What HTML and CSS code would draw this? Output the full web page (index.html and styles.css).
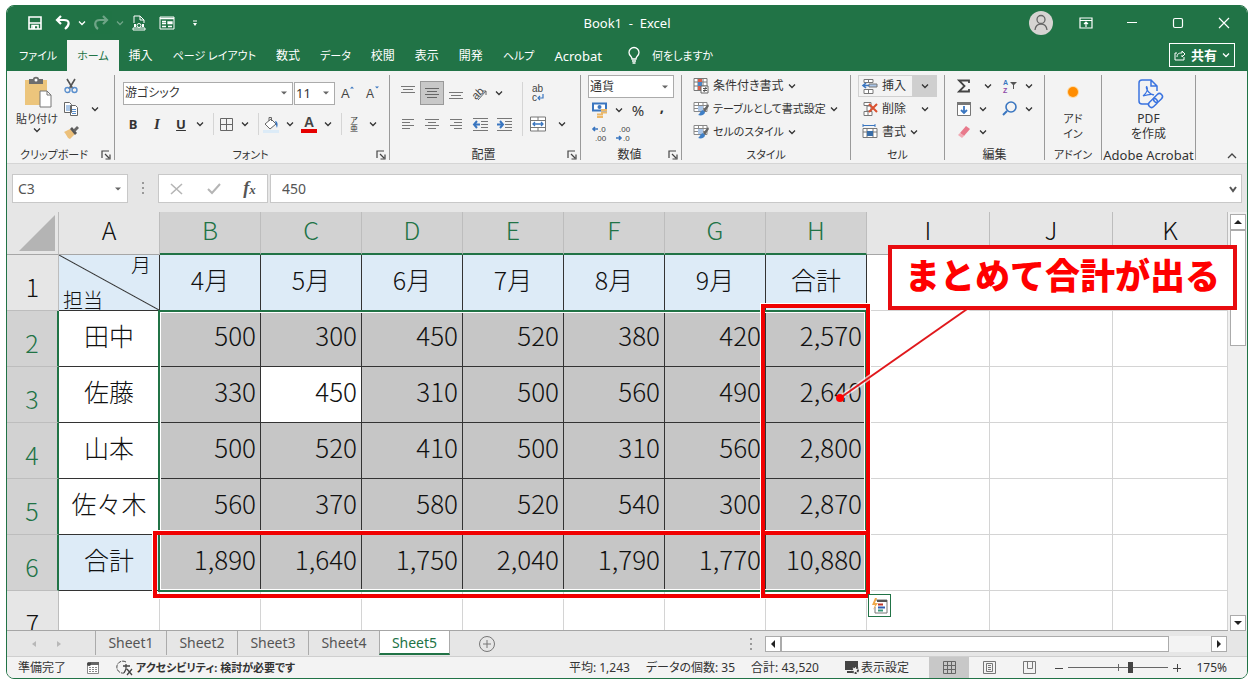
FILE: index.html
```html
<!DOCTYPE html>
<html lang="ja">

<head>
    <meta charset="UTF-8">
    <meta name="viewport" content="width=device-width, initial-scale=1.0">
    <title>Book1 - Excel</title>
    <link rel="stylesheet" href="styles.css">
</head>

<body>
    <!-- 共通アイコン -->
    <svg class="sprite" aria-hidden="true">
        <symbol id="chev" viewBox="0 0 8 8"><path d="M1 2.500l3 3 3-3" fill="none" stroke="currentColor" stroke-width="1.300"/></symbol>
        <symbol id="tri" viewBox="0 0 8 8"><path d="M1 2.500h6L4 5.500z" fill="#666"/></symbol>
        <symbol id="launch" viewBox="0 0 10 10"><path d="M1 8V1h7M4 4l4 4M9 4.500V9H4.500" fill="none" stroke="#444" stroke-width="1.200"/></symbol>
        <symbol id="brushgrid" viewBox="0 0 16 16"><path d="M1 1.500h13v9H1zM1 4.500h13M1 7.500h13M5.500 1.500v9M10 1.500v9" fill="#fff" stroke="#888"/><path d="M5 5h5v5H5z" fill="#a9c4e6"/><path d="M15 3l-5 6 2 2 4-6z" fill="#666"/><path d="M10 9l2 2c0 3-4 4-7 3 2-1 2-4 5-5z" fill="#3f7fc6"/></symbol>
    </svg>

    <div class="window">
        <!-- タイトルバー -->
        <header class="titlebar">
            <div class="quick">
                <button class="q-btn" aria-label="上書き保存"><svg width="14" height="14" viewBox="0 0 14 14"><path d="M1 1h12v12H1z" fill="none" stroke="#fff" stroke-width="1.600"/><path d="M1 7h12M4 13V9.500h6V13" fill="none" stroke="#fff" stroke-width="1.600"/><path d="M5 10h2v3H5z" fill="#fff"/></svg></button>
                <button class="q-btn" aria-label="元に戻す"><svg width="16" height="14" viewBox="0 0 16 14"><path d="M6 0L2 4l4 4M2 4h7c6 0 6 5 1 9" fill="none" stroke="#fff" stroke-width="2.200"/></svg></button>
                <button class="drop" aria-label="元に戻す一覧"><svg width="8" height="8"><use href="#chev"/></svg></button>
                <button class="q-btn faded" aria-label="やり直し"><svg width="16" height="14" viewBox="0 0 16 14"><path d="M10 0l4 4-4 4M14 4H7C1 4 1 10 5 13" fill="none" stroke="#fff" stroke-width="2.200"/></svg></button>
                <button class="drop faded" aria-label="やり直し一覧"><svg width="8" height="8"><use href="#chev"/></svg></button>
                <button class="q-btn" aria-label="印刷プレビュー"><svg width="14" height="16" viewBox="0 0 14 16"><path d="M2 8V1h6l4 4v3M8 1v4h4M1 15h12v-2H1z" fill="none" stroke="#fff"/><path d="M2 9h2v3H2zM10 9h2v3h-2z" fill="#fff"/><circle cx="7" cy="10.500" r="2" fill="none" stroke="#fff"/></svg></button>
                <button class="q-btn" aria-label="フォーム"><svg width="16" height="14" viewBox="0 0 16 14"><path d="M1 1h14v12H1z" fill="none" stroke="#fff"/><path d="M1 2.500h14M3 5.500h4M3 7.500h4M3 10.500h4M9 6h4v1.500H9zM9 10.500h4" fill="none" stroke="#fff" stroke-width="1.300"/></svg></button>
                <button class="q-btn" aria-label="カスタマイズ"><svg width="6" height="8" viewBox="0 0 6 8"><path d="M1 2h4" stroke="#fff"/><path d="M1 4h4L3 7z" fill="#fff"/></svg></button>
            </div>
            <h1 class="title">Book1 &nbsp;- &nbsp;Excel</h1>
            <div class="win-buttons">
                <button class="avatar" aria-label="アカウント"><svg width="24" height="24" viewBox="0 0 24 24"><circle cx="12" cy="12" r="12" fill="#d6d4d2"/><circle cx="12" cy="8.500" r="4" fill="none" stroke="#666" stroke-width="1.300"/><path d="M6 19c1-8 11-8 12 0" fill="none" stroke="#666" stroke-width="1.300"/></svg></button>
                <button class="win-btn" aria-label="リボンの表示オプション"><svg width="14" height="12" viewBox="0 0 14 12"><path d="M1 1h12v10H1zM1 3.500h12M7 10V5.500M5 7l2-2 2 2" fill="none" stroke="#fff" stroke-width="1.200"/></svg></button>
                <button class="win-btn" aria-label="最小化"><svg width="12" height="12"><path d="M1 5.500h10" stroke="#fff"/></svg></button>
                <button class="win-btn" aria-label="最大化"><svg width="12" height="12"><rect x="1.500" y="1.500" width="9" height="9" rx="1.500" fill="none" stroke="#fff" stroke-width="1.200"/></svg></button>
                <button class="win-btn" aria-label="閉じる"><svg width="12" height="12"><path d="M1 1l10 10M11 1L1 11" stroke="#fff" stroke-width="1.200"/></svg></button>
            </div>
        </header>

        <!-- リボンのタブ -->
        <nav class="tabs">
            <a href="#" class="tab kana">ファイル</a>
            <a href="#" class="tab kana active">ホーム</a>
            <a href="#" class="tab">挿入</a>
            <a href="#" class="tab kana">ページ レイアウト</a>
            <a href="#" class="tab">数式</a>
            <a href="#" class="tab kana">データ</a>
            <a href="#" class="tab">校閲</a>
            <a href="#" class="tab">表示</a>
            <a href="#" class="tab">開発</a>
            <a href="#" class="tab kana">ヘルプ</a>
            <a href="#" class="tab latin">Acrobat</a>
            <a href="#" class="tab kana tell"><svg width="12" height="17" viewBox="0 0 12 17"><path d="M4 12c0-3-3-3-3-6.500a5 5 0 0 1 10 0C11 9 8 9 8 12zM4 14h4M4.500 16h3" fill="none" stroke="#fff" stroke-width="1.300"/></svg>何をしますか</a>
            <button class="share"><svg width="12" height="12" viewBox="0 0 12 12"><path d="M3 4H1v7h9V8M3 8c0-4 3-4 5-4V2l3 3-3 3V6" fill="none" stroke="#fff"/></svg>共有<svg width="8" height="8"><use href="#chev"/></svg></button>
        </nav>

        <!-- リボン -->
        <div class="ribbon">
            <section class="group g-clip">
                <div class="body">
                    <button class="big kana">
                        <svg width="30" height="32" viewBox="0 0 30 32"><path d="M3 3h22v25H3z" fill="#ecc57c"/><path d="M7 2h4c0-3 6-3 6 0h4v5H7z" fill="#6d6d6d"/><circle cx="14" cy="3" r="1.500" fill="#fff"/><path d="M18 14h7l4 4v12H18z" fill="#fff" stroke="#777"/><path d="M25 14v4h4" fill="none" stroke="#777"/></svg>
                        <span>貼り付け</span>
                        <svg width="8" height="8"><use href="#chev"/></svg>
                    </button>
                    <div class="stack">
                        <button class="tool" aria-label="切り取り"><svg width="14" height="16" viewBox="0 0 14 16"><path d="M3 1l6 10M11 1L5 11" stroke="#555" stroke-width="1.600"/><circle cx="3.500" cy="12" r="2.500" fill="none" stroke="#5a8fcd" stroke-width="1.400"/><circle cx="10.500" cy="12" r="2.500" fill="none" stroke="#5a8fcd" stroke-width="1.400"/></svg></button>
                        <button class="tool" aria-label="コピー"><svg width="16" height="16" viewBox="0 0 16 16"><path d="M1.500 1.500h5l2 2v8h-7zM7.500 4.500h5l2 2v8h-7z" fill="#fff" stroke="#666"/><path d="M3 5h4M3 7h4M3 9h4M9 8.500h4M9 10.500h4M9 12.500h4" stroke="#5a8fcd"/></svg></button>
                        <button class="tool" aria-label="書式のコピー"><svg width="16" height="16" viewBox="0 0 16 16"><path d="M1 8l6-3 5 5-5 5C4 14 4 11 1 8z" fill="#ecc07a"/><path d="M7 5l2-2 5 6-2 2z" fill="#555"/><path d="M10 6l4-4 2 2-4 4z" fill="#666"/></svg></button>
                    </div>
                    <button class="drop mid" aria-label="コピー一覧"><svg width="8" height="8"><use href="#chev"/></svg></button>
                </div>
                <footer class="cap kana"><span>クリップボード</span><svg width="10" height="10"><use href="#launch"/></svg></footer>
            </section>

            <section class="group g-font">
                <div class="body rows">
                    <div class="row combos">
                        <label class="combo wide"><select aria-label="フォント"><option>游ゴシック</option></select><svg width="8" height="8"><use href="#tri"/></svg></label>
                        <label class="combo narrow"><select aria-label="フォント サイズ"><option>11</option></select><svg width="8" height="8"><use href="#tri"/></svg></label>
                        <button class="tool" aria-label="拡大"><svg width="14" height="16" viewBox="0 0 14 16"><text x="0" y="13" class="glyph" font-size="13">A</text><path d="M9 3.500l2-2 2 2z" fill="#3a76c0"/></svg></button>
                        <button class="tool" aria-label="縮小"><svg width="14" height="16" viewBox="0 0 14 16"><text x="0" y="13" class="glyph" font-size="12">A</text><path d="M9 1.500l2 2 2-2z" fill="#3a76c0"/></svg></button>
                    </div>
                    <div class="row">
                        <button class="tool bold">B</button>
                        <button class="tool ital">I</button>
                        <button class="tool under">U</button>
                        <button class="drop" aria-label="下線"><svg width="8" height="8"><use href="#chev"/></svg></button>
                        <i class="sep"></i>
                        <button class="tool" aria-label="罫線"><svg width="15" height="15" viewBox="0 0 15 15"><path d="M1.500 1.500h12v12h-12zM7.500 1.500v12M1.500 7.500h12" fill="none" stroke="#666"/></svg></button>
                        <button class="drop" aria-label="罫線一覧"><svg width="8" height="8"><use href="#chev"/></svg></button>
                        <i class="sep"></i>
                        <button class="tool" aria-label="塗りつぶし"><svg width="16" height="17" viewBox="0 0 16 17"><path d="M2 8l6-5 5 5-6 5z" fill="#fff" stroke="#666"/><path d="M6 5V1.500h2.500V5" fill="none" stroke="#666"/><path d="M12 5c3 0 3 4 2 7-1-2-1-4-2-7z" fill="#3a76c0"/><path d="M0 14h16v3H0z" fill="#dcebf7"/></svg></button>
                        <button class="drop" aria-label="塗りつぶし一覧"><svg width="8" height="8"><use href="#chev"/></svg></button>
                        <button class="tool" aria-label="フォントの色"><svg width="16" height="17" viewBox="0 0 16 17"><text x="3" y="11" class="glyph" font-size="14" font-weight="700">A</text><path d="M0 13h16v4H0z" fill="#e60000"/></svg></button>
                        <button class="drop" aria-label="フォントの色一覧"><svg width="8" height="8"><use href="#chev"/></svg></button>
                        <i class="sep"></i>
                        <button class="tool ruby" aria-label="ふりがな"><small>ア</small><small>亜</small></button>
                        <button class="drop" aria-label="ふりがな一覧"><svg width="8" height="8"><use href="#chev"/></svg></button>
                    </div>
                </div>
                <footer class="cap kana"><span>フォント</span><svg width="10" height="10"><use href="#launch"/></svg></footer>
            </section>

            <section class="group g-align">
                <div class="body rows side">
                    <div class="lines">
                        <div class="row">
                            <button class="tool" aria-label="上揃え"><svg width="14" height="16"><path d="M0 1.500h14M2 4.500h10M0 7.500h14" stroke="#777"/></svg></button>
                            <button class="tool on" aria-label="上下中央揃え"><svg width="14" height="16"><path d="M0 3.500h14M2 6.500h10M0 9.500h14M2 12.500h10" stroke="#666"/></svg></button>
                            <button class="tool" aria-label="下揃え"><svg width="14" height="16"><path d="M0 7.500h14M2 10.500h10M0 13.500h14" stroke="#777"/></svg></button>
                            <button class="tool" aria-label="方向"><svg width="16" height="16" viewBox="0 0 16 16"><text x="0" y="12" class="glyph" font-size="11" transform="rotate(-45 6 9)">ab</text><path d="M6 15l8-9M10 6h4v4" fill="none" stroke="#666"/></svg></button>
                            <button class="drop" aria-label="方向一覧"><svg width="8" height="8"><use href="#chev"/></svg></button>
                        </div>
                        <div class="row">
                            <button class="tool" aria-label="左揃え"><svg width="12" height="12"><path d="M0 1.500h12M0 4.500h8M0 7.500h12M0 10.500h8" stroke="#777"/></svg></button>
                            <button class="tool" aria-label="中央揃え"><svg width="14" height="12"><path d="M0 1.500h14M3 4.500h8M0 7.500h14M3 10.500h8" stroke="#777"/></svg></button>
                            <button class="tool" aria-label="右揃え"><svg width="12" height="12"><path d="M0 1.500h12M4 4.500h8M0 7.500h12M4 10.500h8" stroke="#777"/></svg></button>
                            <button class="tool" aria-label="インデントを減らす"><svg width="15" height="13"><path d="M0 .5h15M8 3.500h7M8 6.500h7M8 9.500h7M0 12.500h15" stroke="#777"/><path d="M7 6.500H1M4 3L1 6.500 4 10" fill="none" stroke="#3a76c0" stroke-width="2"/></svg></button>
                            <button class="tool" aria-label="インデントを増やす"><svg width="15" height="13"><path d="M0 .5h15M8 3.500h7M8 6.500h7M8 9.500h7M0 12.500h15" stroke="#777"/><path d="M0 6.500h6M3 3l3 3.500L3 10" fill="none" stroke="#3a76c0" stroke-width="2"/></svg></button>
                        </div>
                    </div>
                    <i class="sep tall"></i>
                    <div class="lines">
                        <div class="row">
                            <button class="tool" aria-label="折り返して全体を表示"><svg width="14" height="18" viewBox="0 0 14 18"><text x="1" y="8" class="glyph" font-size="10">ab</text><text x="1" y="17" class="glyph" font-size="10">c</text><path d="M12 10v4H7M9 12l-2 2 2 2" fill="none" stroke="#3a76c0" stroke-width="1.200"/></svg></button>
                        </div>
                        <div class="row">
                            <button class="tool" aria-label="セルを結合"><svg width="16" height="16" viewBox="0 0 16 16"><path d="M.5 1v14h15V1zM.5 4.500h15M.5 11.500h15M8 1v3.500M8 11.500V15" fill="#fff" stroke="#777"/><path d="M3 8h10M5 6L3 8l2 2M11 6l2 2-2 2" fill="none" stroke="#3a76c0" stroke-width="1.300"/></svg></button>
                            <button class="drop far" aria-label="結合一覧"><svg width="8" height="8"><use href="#chev"/></svg></button>
                        </div>
                    </div>
                </div>
                <footer class="cap"><span>配置</span><svg width="10" height="10"><use href="#launch"/></svg></footer>
            </section>

            <section class="group g-num">
                <div class="body triple">
                    <label class="combo"><select aria-label="表示形式"><option>通貨</option></select><svg width="8" height="8"><use href="#tri"/></svg></label>
                    <div class="row">
                        <button class="tool" aria-label="通貨表示形式"><svg width="16" height="16" viewBox="0 0 16 16"><path d="M1 1.500h13v7H1z" fill="#fff" stroke="#3a76c0" stroke-width="2"/><circle cx="7.500" cy="5" r="2" fill="#3a76c0"/><path d="M9 8h6M9 10.500h6M5 12.500h6M5 15h6" stroke="#ecb868" stroke-width="2"/></svg></button>
                        <button class="drop" aria-label="通貨一覧"><svg width="8" height="8"><use href="#chev"/></svg></button>
                        <button class="tool sign">%</button>
                        <button class="tool sign comma">,</button>
                    </div>
                    <div class="row">
                        <button class="tool" aria-label="小数点以下の桁数を増やす"><svg width="16" height="18" viewBox="0 0 16 18"><text x="7" y="8" class="glyph" font-size="8">.0</text><text x="3" y="17" class="glyph" font-size="8">.00</text><path d="M6 5H1M3 3L1 5l2 2" fill="none" stroke="#3a76c0" stroke-width="1.600"/></svg></button>
                        <button class="tool" aria-label="小数点以下の桁数を減らす"><svg width="16" height="18" viewBox="0 0 16 18"><text x="3" y="8" class="glyph" font-size="8">.00</text><text x="7" y="17" class="glyph" font-size="8">.0</text><path d="M0 14h5M3 12l2 2-2 2" fill="none" stroke="#3a76c0" stroke-width="1.600"/></svg></button>
                    </div>
                </div>
                <footer class="cap"><span>数値</span><svg width="10" height="10"><use href="#launch"/></svg></footer>
            </section>

            <section class="group g-style">
                <div class="body triple">
                    <button class="line"><svg width="16" height="16" viewBox="0 0 16 16"><path d="M1 .5h13v12H1zM1 4h13M1 8h13M5 .5v12M10 .5v12" fill="#fff" stroke="#777"/><path d="M5 1h4v3H5zM5 8h4v4H5z" fill="#d8604c"/><path d="M5 4h4v4H5z" fill="#4a83c6"/><path d="M8 8h7v7H8z" fill="#fff" stroke="#666"/><path d="M10 10.500h4M10 12.500h4M13 9l-2 5" stroke="#555"/></svg>条件付き書式<svg width="8" height="8"><use href="#chev"/></svg></button>
                    <button class="line kana"><svg width="16" height="16"><use href="#brushgrid"/></svg>テーブルとして書式設定<svg width="8" height="8"><use href="#chev"/></svg></button>
                    <button class="line kana"><svg width="16" height="16"><use href="#brushgrid"/></svg>セルのスタイル<svg width="8" height="8"><use href="#chev"/></svg></button>
                </div>
                <footer class="cap kana solo"><span>スタイル</span></footer>
            </section>

            <section class="group g-cell">
                <div class="body triple">
                    <div class="row split hot">
                        <button class="line"><svg width="16" height="16" viewBox="0 0 16 16"><path d="M2 1.500h9v3H2zM6.500 1.500v3M2 11.500h9v4H2zM6.500 11.500v4" fill="#fff" stroke="#777"/><path d="M7 6h8v3H7z" fill="#a9c4e6" stroke="#777"/><path d="M7 7.500H1M4 5L1 7.500 4 10" fill="none" stroke="#3a76c0" stroke-width="1.600"/></svg>挿入</button>
                        <button class="arrow" aria-label="挿入一覧"><svg width="8" height="8"><use href="#chev"/></svg></button>
                    </div>
                    <div class="row split">
                        <button class="line"><svg width="16" height="16" viewBox="0 0 16 16"><path d="M2 1.500h7v3H2zM5 5v5h4V5zM2 10.500h8v4H2zM6 10.500v4" fill="#fff" stroke="#777"/><path d="M7 3l8 8M15 3l-8 8" stroke="#d9502e" stroke-width="2"/></svg>削除</button>
                        <button class="arrow" aria-label="削除一覧"><svg width="8" height="8"><use href="#chev"/></svg></button>
                    </div>
                    <div class="row split">
                        <button class="line"><svg width="16" height="16" viewBox="0 0 16 16"><path d="M1 1.500h12M1 0v3M13 0v3" stroke="#3a76c0"/><path d="M1 4.500h14v9H1zM5 4.500v9M11 4.500v9M1 8h14" fill="#fff" stroke="#777"/><path d="M5 7h6v5H5z" fill="#3a6ea8"/></svg>書式<svg width="8" height="8"><use href="#chev"/></svg></button>
                    </div>
                </div>
                <footer class="cap kana solo"><span>セル</span></footer>
            </section>

            <section class="group g-edit">
                <div class="body duo">
                    <div class="triple">
                        <div class="row"><button class="tool" aria-label="合計"><svg width="14" height="14" viewBox="0 0 14 14"><path d="M12 4V1.500H2L7.500 7 2 12.500h10V10" fill="none" stroke="#444" stroke-width="1.800"/></svg></button><button class="drop far" aria-label="合計一覧"><svg width="8" height="8"><use href="#chev"/></svg></button></div>
                        <div class="row"><button class="tool" aria-label="フィル"><svg width="14" height="14" viewBox="0 0 14 14"><path d="M.5.5h13v13H.5z" fill="#fff" stroke="#777"/><path d="M0 0h14v3H0z" fill="#777"/><path d="M7 4v7M4 8l3 3 3-3" fill="none" stroke="#3a76c0" stroke-width="1.800"/></svg></button><button class="drop" aria-label="フィル一覧"><svg width="8" height="8"><use href="#chev"/></svg></button></div>
                        <div class="row"><button class="tool" aria-label="クリア"><svg width="14" height="14" viewBox="0 0 14 14"><path d="M9 1l4 3-6 7-4-3z" fill="#e8798b"/><path d="M3 8l4 3-2 2-4-3z" fill="#f2a9b4"/></svg></button><button class="drop" aria-label="クリア一覧"><svg width="8" height="8"><use href="#chev"/></svg></button></div>
                    </div>
                    <div class="triple">
                        <div class="row"><button class="tool" aria-label="並べ替えとフィルター"><svg width="14" height="16" viewBox="0 0 14 16"><text x="0" y="7" class="sort-a" font-size="7">A</text><text x="0" y="15" class="sort-z" font-size="7">Z</text><path d="M7 4h7l-3 3v4h-1V7z" fill="#555"/></svg></button><button class="drop" aria-label="並べ替え一覧"><svg width="8" height="8"><use href="#chev"/></svg></button></div>
                        <div class="row"><button class="tool" aria-label="検索と選択"><svg width="16" height="16" viewBox="0 0 16 16"><circle cx="9" cy="6" r="5" fill="none" stroke="#3a76c0" stroke-width="1.600"/><path d="M5 10l-4 4" stroke="#3a76c0" stroke-width="2"/></svg></button><button class="drop" aria-label="検索一覧"><svg width="8" height="8"><use href="#chev"/></svg></button></div>
                    </div>
                </div>
                <footer class="cap solo"><span>編集</span></footer>
            </section>

            <section class="group g-addin">
                <div class="body">
                    <button class="big kana"><svg width="30" height="32" viewBox="0 0 30 32"><circle cx="15" cy="15" r="6" fill="#ffd9a0"/><circle cx="15" cy="15" r="5" fill="#ff8c00"/></svg><span>アド<br>イン</span></button>
                </div>
                <footer class="cap kana solo"><span>アドイン</span></footer>
            </section>

            <section class="group g-adobe">
                <div class="body">
                    <button class="big"><svg width="30" height="32" viewBox="0 0 30 32"><path d="M14 27H8a3 3 0 0 1-3-3V6a3 3 0 0 1 3-3h9l6 6v5M17 3v6h6" fill="none" stroke="#3b74e0" stroke-width="1.500"/><path d="M9 19c4-3 5-7 4-9s-2 4 6 8c2 0-1-2-10 1z" fill="none" stroke="#3b74e0" stroke-width="1.200"/><g fill="none" stroke="#3b74e0" stroke-width="1.500"><rect x="19" y="18" width="10" height="6" rx="3" transform="rotate(-45 24 21)"/><rect x="14" y="23" width="10" height="6" rx="3" transform="rotate(-45 19 26)"/></g></svg><span>PDF<br>を作成</span></button>
                </div>
                <footer class="cap solo latin"><span>Adobe Acrobat</span></footer>
            </section>

            <button class="collapse" aria-label="リボンを折りたたむ"><svg width="10" height="8"><path d="M1 6l4-4 4 4" fill="none" stroke="#444" stroke-width="1.300"/></svg></button>
        </div>

        <!-- 数式バー -->
        <div class="formula">
            <label class="box name"><input type="text" value="C3" aria-label="名前ボックス"><svg width="8" height="8"><use href="#tri"/></svg></label>
            <span class="grip"></span>
            <div class="box fx">
                <button aria-label="キャンセル"><svg width="14" height="12"><path d="M1 1l11 10M12 1L1 11" stroke="#b5b5b5" stroke-width="1.600"/></svg></button>
                <button aria-label="入力"><svg width="14" height="12"><path d="M1 6l4 4 8-9" fill="none" stroke="#b5b5b5" stroke-width="2"/></svg></button>
                <button class="fx-mark">f<small>x</small></button>
            </div>
            <label class="box value"><input type="text" value="450" aria-label="数式"><svg width="10" height="10"><path d="M2 3l3 4 3-4" fill="none" stroke="#555" stroke-width="2"/></svg></label>
        </div>

        <!-- シート -->
        <main class="book">
            <div class="grid">
                <table class="sheet">
                    <colgroup>
                        <col class="c-num">
                        <col class="c-cell" span="8">
                        <col class="c-wide" span="2">
                        <col>
                    </colgroup>
                    <thead>
                        <tr>
                            <th class="corner"><svg width="36" height="36"><path d="M36 0v36H0z" fill="#b4b4b4"/></svg></th>
                            <th>A</th>
                            <th class="sel">B</th>
                            <th class="sel">C</th>
                            <th class="sel">D</th>
                            <th class="sel">E</th>
                            <th class="sel">F</th>
                            <th class="sel">G</th>
                            <th class="sel">H</th>
                            <th>I</th>
                            <th>J</th>
                            <th>K</th>
                        </tr>
                    </thead>
                    <tbody>
                        <tr>
                            <th>1</th>
                            <td class="diag"><div><span>月</span><span>担当</span></div></td>
                            <td class="head">4月</td>
                            <td class="head">5月</td>
                            <td class="head">6月</td>
                            <td class="head">7月</td>
                            <td class="head">8月</td>
                            <td class="head">9月</td>
                            <td class="head">合計</td>
                            <td></td><td></td><td></td>
                        </tr>
                        <tr>
                            <th class="sel">2</th>
                            <td class="person">田中</td>
                            <td class="num">500</td><td class="num">300</td><td class="num">450</td><td class="num">520</td><td class="num">380</td><td class="num">420</td><td class="num">2,570</td>
                            <td></td><td></td><td></td>
                        </tr>
                        <tr>
                            <th class="sel">3</th>
                            <td class="person">佐藤</td>
                            <td class="num">330</td><td class="num current">450</td><td class="num">310</td><td class="num">500</td><td class="num">560</td><td class="num">490</td><td class="num">2,640</td>
                            <td></td><td></td><td></td>
                        </tr>
                        <tr>
                            <th class="sel">4</th>
                            <td class="person">山本</td>
                            <td class="num">500</td><td class="num">520</td><td class="num">410</td><td class="num">500</td><td class="num">310</td><td class="num">560</td><td class="num">2,800</td>
                            <td></td><td></td><td></td>
                        </tr>
                        <tr>
                            <th class="sel">5</th>
                            <td class="person">佐々木</td>
                            <td class="num">560</td><td class="num">370</td><td class="num">580</td><td class="num">520</td><td class="num">540</td><td class="num">300</td><td class="num">2,870</td>
                            <td></td><td></td><td></td>
                        </tr>
                        <tr>
                            <th class="sel">6</th>
                            <td class="head">合計</td>
                            <td class="num">1,890</td><td class="num">1,640</td><td class="num">1,750</td><td class="num">2,040</td><td class="num">1,790</td><td class="num">1,770</td><td class="num">10,880</td>
                            <td></td><td></td><td></td>
                        </tr>
                        <tr>
                            <th>7</th>
                            <td></td><td></td><td></td><td></td><td></td><td></td><td></td><td></td><td></td><td></td><td></td>
                        </tr>
                    </tbody>
                </table>
            </div>
            <div class="vscroll">
                <button aria-label="上へ"><svg width="8" height="8"><path d="M0 6h8L4 2z" fill="#222"/></svg></button>
                <span class="thumb"></span>
                <button class="end" aria-label="下へ"><svg width="8" height="8"><path d="M0 2h8L4 6z" fill="#222"/></svg></button>
            </div>

            <div class="selection"></div>
            <div class="frame frame-row"></div>
            <div class="frame frame-col"></div>
            <button class="quick-analysis" aria-label="クイック分析"><svg width="16" height="16" viewBox="0 0 16 16"><path d="M4 2h11v13H3V9" fill="#fff" stroke="#777"/><path d="M5 3h10" stroke="#555" stroke-width="2"/><path d="M6 6.500h5" stroke="#c0392b" stroke-width="2"/><path d="M6 9.500h7" stroke="#2f5fb3" stroke-width="2"/><path d="M6 12.500h5" stroke="#3a9a7a" stroke-width="2"/><path d="M3 0L0 7h3l-2 5 5-7H3l2-5z" fill="#f0a94a"/></svg></button>
            <svg class="pointer" width="140" height="104"><path d="M8 94L138 3" stroke="#fff" stroke-width="5" opacity=".7"/><path d="M8 94L138 3" stroke="#e0181c" stroke-width="2"/><circle cx="8" cy="94" r="4" fill="#f00"/></svg>
            <div class="callout">まとめて合計が出る</div>
        </main>

        <!-- シート見出し -->
        <div class="sheetbar">
            <button class="nav" aria-label="前のシート"><svg width="6" height="8"><path d="M5 1v6L1 4z" fill="#b8b8b8"/></svg></button>
            <button class="nav" aria-label="次のシート"><svg width="6" height="8"><path d="M1 1v6l4-3z" fill="#b8b8b8"/></svg></button>
            <div class="sheets">
                <a href="#">Sheet1</a>
                <a href="#">Sheet2</a>
                <a href="#">Sheet3</a>
                <a href="#">Sheet4</a>
                <a href="#" class="active">Sheet5</a>
            </div>
            <button class="add" aria-label="新しいシート"><svg width="16" height="16" viewBox="0 0 16 16"><circle cx="8" cy="8" r="7.500" fill="none" stroke="#777"/><path d="M8 4v8M4 8h8" stroke="#777"/></svg></button>
            <span class="grip small"></span>
            <div class="hscroll">
                <button aria-label="左へ"><svg width="8" height="8"><path d="M6 0v8L2 4z" fill="#222"/></svg></button>
                <span class="thumb"></span>
                <button class="end" aria-label="右へ"><svg width="8" height="8"><path d="M2 0v8l4-4z" fill="#222"/></svg></button>
            </div>
        </div>

        <!-- ステータスバー -->
        <footer class="status">
            <span>準備完了</span>
            <svg width="14" height="13" viewBox="0 0 14 13"><path d="M1.500 2.500h11v10h-11z" fill="#fff" stroke="#888"/><path d="M4 1h9v3H4z" fill="#666"/><circle cx="3" cy="3" r="2" fill="#444"/><path d="M3 6.500h8M3 8.500h8M3 10.500h8" stroke="#888" stroke-dasharray="2 1"/></svg>
            <button class="access kana"><svg width="16" height="16" viewBox="0 0 16 16"><path d="M8 2a6 6 0 1 0-2 11" fill="none" stroke="#444" stroke-dasharray="4 1"/><path d="M5 6h7M8 4v5l-2 4M9 9l5 6M14 9l-5 6" fill="none" stroke="#444" stroke-width="1.300"/></svg>アクセシビリティ: 検討が必要です</button>
            <div class="totals">
                <span>平均: 1,243</span>
                <span>データの個数: 35</span>
                <span>合計: 43,520</span>
            </div>
            <button class="disp"><svg width="16" height="15" viewBox="0 0 16 15"><path d="M1 1h13v9H1z" fill="#444"/><path d="M3 12h5" stroke="#444" stroke-width="2"/><circle cx="11" cy="10" r="3" fill="#f3f3f3" stroke="#444" stroke-width="2" stroke-dasharray="2 1"/></svg>表示設定</button>
            <button class="view on" aria-label="標準"><svg width="13" height="13"><path d="M.5.500h12v12H.5zM4.500.500v12M8.500.500v12M.5 4.500h12M.5 8.500h12" fill="none" stroke="#666"/></svg></button>
            <button class="view" aria-label="ページ レイアウト"><svg width="13" height="13"><path d="M.5.500h12v12H.5zM3.500 2.500h6v8h-6zM5 4.500h3M5 6.500h3M5 8.500h3" fill="none" stroke="#777"/></svg></button>
            <button class="view" aria-label="改ページ プレビュー"><svg width="13" height="13"><path d="M.5.500h12v12H.5zM4.500.500v7h5M9.500.500v7" fill="none" stroke="#777"/></svg></button>
            <button class="zoom" aria-label="縮小"><svg width="8" height="8"><path d="M0 4.500h8" stroke="#444"/></svg></button>
            <input class="slider" type="range" min="0" max="100" value="63" aria-label="ズーム">
            <button class="zoom" aria-label="拡大"><svg width="8" height="8"><path d="M0 4.500h8M4.500 0v8" stroke="#444"/></svg></button>
            <span class="percent">175%</span>
        </footer>
    </div>
</body>

</html>
```

FILE: styles.css
```css
* {
    box-sizing: border-box;
}

body {
    margin: 0;
    padding: 5px 6px 6px;
    background-color: #fff;
    font-family: "Noto Sans", "Noto Sans CJK JP", sans-serif;
    font-size: 12px;
    line-height: 16px;
    color: #333;
    font-feature-settings: "palt";
}

button,
input,
select {
    margin: 0;
    padding: 0;
    border: none;
    background: none;
    color: inherit;
    font: inherit;
    font-feature-settings: inherit;
}

a {
    color: inherit;
    text-decoration: none;
}

svg {
    display: block;
    flex: none;
    overflow: visible;
}

.sprite {
    width: 0;
    height: 0;
    position: absolute;
}

.glyph {
    fill: #444;
    font-family: "Liberation Sans", sans-serif;
}

.sort-a {
    fill: #3a76c0;
    font-family: "Liberation Sans", sans-serif;
    font-weight: 700;
}

.sort-z {
    fill: #8d4aa8;
    font-family: "Liberation Sans", sans-serif;
    font-weight: 700;
}

.window {
    display: flex;
    flex-direction: column;
    height: calc(100vh - 11px);
    border: 1px solid #217346;
    border-radius: 8px;
    overflow: hidden;
    background-color: #e6e6e6;
}

/* タイトルバー */
.titlebar {
    display: flex;
    align-items: center;
    height: 34px;
    flex: none;
    background-color: #217346;
    color: #fff;
}

.quick,
.win-buttons {
    display: flex;
    align-items: center;
    flex: 1;
}

.q-btn {
    display: flex;
    justify-content: center;
    width: 28px;
}

.q-btn:first-child {
    margin-left: 14px;
}

.drop {
    display: flex;
    align-items: center;
    justify-content: center;
    width: 14px;
    height: 22px;
}

.quick .drop {
    width: 10px;
}

.faded {
    opacity: 0.35;
}

.title {
    margin: 0;
    font-size: 13px;
    font-weight: 400;
}

.win-buttons {
    justify-content: flex-end;
}

.win-btn {
    display: flex;
    justify-content: center;
    width: 46px;
}

.avatar {
    margin-right: 10px;
}

/* タブ */
.tabs {
    display: flex;
    align-items: stretch;
    height: 31px;
    flex: none;
    padding: 0 12px 0 2px;
    background-color: #217346;
    color: #fff;
    white-space: nowrap;
}

.tab {
    display: flex;
    align-items: center;
    padding: 0 10px;
}

.tab.active {
    background-color: #f3f3f3;
    color: #217346;
}

.kana {
    font-size: 11px;
}

.tab.tell {
    gap: 12px;
    padding-left: 16px;
}

.share {
    display: flex;
    align-items: center;
    gap: 5px;
    height: 24px;
    margin: 3px 0 0 auto;
    padding: 0 4px;
    border: 1px solid #fff;
    font-size: 13px;
    font-weight: 700;
}

.latin {
    font-size: 13px;
}

/* リボン */
.ribbon {
    display: flex;
    height: 93px;
    flex: none;
    padding: 4px 0 3px;
    background-color: #f3f3f3;
    border-bottom: 1px solid #d5d5d5;
    white-space: nowrap;
}

.group {
    display: flex;
    flex-direction: column;
    justify-content: space-between;
    flex: none;
    border-right: 1px solid #9a9a9a;
}

.g-clip {
    width: 108px;
}

.g-font {
    width: 275px;
}

.g-align {
    width: 191px;
}

.g-num {
    width: 101px;
}

.g-style {
    width: 169px;
}

.g-cell {
    width: 94px;
}

.g-edit {
    width: 100px;
}

.g-addin {
    width: 57px;
}

.g-adobe {
    width: 94px;
}

.body {
    display: flex;
}

.row {
    display: flex;
    align-items: center;
    height: 22px;
}

.rows {
    flex-direction: column;
    gap: 9px;
    padding: 7px 0 0 6px;
}

.rows.side {
    flex-direction: row;
    gap: 0;
}

.lines {
    display: flex;
    flex-direction: column;
    gap: 9px;
}

.triple {
    display: flex;
    flex-direction: column;
    gap: 1px;
    padding-left: 7px;
}

.duo .triple:last-child {
    padding-left: 3px;
}

.combos {
    gap: 1px;
    padding-left: 2px;
}

.tool {
    display: flex;
    align-items: center;
    justify-content: center;
    width: 24px;
    height: 22px;
}

.tool.on {
    height: 24px;
    border: 1px solid #999;
    background-color: #c8c8c8;
}

.bold {
    font-size: 13px;
    font-weight: 700;
}

.ital {
    font-family: "Liberation Serif", serif;
    font-size: 15px;
    font-style: italic;
    font-weight: 700;
}

.under {
    font-size: 13px;
    font-weight: 700;
    text-decoration: underline;
}

.ruby {
    flex-direction: column;
}

.ruby small {
    font-size: 8px;
    line-height: 8px;
}

.sign {
    font-size: 15px;
}

.comma {
    font-weight: 700;
    padding-bottom: 8px;
}

.far {
    margin-left: 5px;
}

.sep {
    width: 1px;
    height: 22px;
    margin-left: 6px;
    background-color: #d5d5d5;
}

.sep.tall {
    height: 54px;
    margin-right: 3px;
}

.combo {
    display: flex;
    align-items: center;
    width: 86px;
    height: 23px;
    padding: 0 4px 0 1px;
    border: 1px solid #ababab;
    background-color: #fff;
}

.combo select {
    flex: 1;
    min-width: 0;
    appearance: none;
    outline: none;
}

.combo.wide {
    width: 170px;
}

.combo.narrow {
    width: 41px;
    font-size: 13px;
}

.big {
    display: flex;
    flex-direction: column;
    align-items: center;
    flex: 1;
    padding-top: 2px;
    line-height: 15px;
}

.big span {
    padding-top: 2px;
}

.g-clip .body {
    padding-left: 7px;
    gap: 2px;
}

.g-clip .big {
    flex: none;
    width: 46px;
}

.stack {
    display: flex;
    flex-direction: column;
    gap: 1px;
}

.stack .tool {
    width: 18px;
}

.mid {
    align-self: center;
    margin-left: 6px;
}

.line {
    display: flex;
    align-items: center;
    gap: 4px;
    height: 22px;
    padding-left: 4px;
}

.split .line {
    width: 55px;
    flex: none;
}

.arrow {
    display: flex;
    align-items: center;
    justify-content: center;
    width: 24px;
    height: 22px;
}

.hot .line {
    border: 1px solid #d0d0d0;
    padding-left: 3px;
}

.hot .arrow {
    background-color: #cfcfcf;
}

.cap {
    display: flex;
    align-items: center;
    height: 10px;
    padding: 0 3px 0 10px;
    line-height: 10px;
}

.cap span {
    flex: 1;
    text-align: center;
}

.cap.solo {
    padding: 0;
}

.g-clip .cap {
    padding-left: 0;
}

.collapse {
    align-self: flex-end;
    margin: 0 10px 0 auto;
}

/* 数式バー */
.formula {
    display: flex;
    flex: none;
    padding: 10px 5px 9px;
}

.box {
    display: flex;
    align-items: center;
    height: 29px;
    border: 1px solid #c8c8c8;
    background-color: #fff;
    font-size: 14px;
    color: #555;
}

.box input {
    flex: 1;
    min-width: 0;
    outline: none;
}

.name {
    width: 116px;
    padding: 0 5px;
}

.value {
    flex: 1;
    padding: 0 3px 0 11px;
}

.grip {
    width: 2px;
    height: 12px;
    margin: 8px 14px;
    background: repeating-linear-gradient(#999 0 2px, transparent 2px 5px);
}

.fx {
    justify-content: space-around;
    width: 110px;
    margin-right: 2px;
}

.fx-mark {
    font-family: "Liberation Serif", serif;
    font-size: 18px;
    font-style: italic;
    font-weight: 700;
}

.fx-mark small {
    font-size: 13px;
}

/* シート */
.book {
    display: flex;
    flex: 1;
    min-height: 0;
    position: relative;
    overflow: hidden;
}

.grid {
    flex: 1;
    overflow: hidden;
    border-bottom: 1px solid #a6a6a6;
    background-color: #fff;
}

.sheet {
    width: 100%;
    table-layout: fixed;
    border-spacing: 0;
    font-family: "Noto Sans CJK JP", sans-serif;
    font-size: 25px;
    font-weight: 300;
    line-height: 32px;
    color: #111;
    font-feature-settings: normal;
}

.c-num {
    width: 52px;
}

.c-cell {
    width: 101px;
}

.c-wide {
    width: 123px;
}

.sheet th,
.sheet td {
    height: 56px;
    padding: 0;
    border-right: 1px solid #d4d4d4;
    border-bottom: 1px solid #d4d4d4;
    text-align: center;
}

.sheet th {
    font-weight: 300;
    background-color: #e6e6e6;
    border-color: #bdbdbd;
}

.sheet thead th {
    height: 43px;
    padding-bottom: 8px;
    border-bottom-color: #a6a6a6;
}

.sheet tbody th {
    padding-top: 6px;
}

.sheet th.sel {
    background-color: #d2d2d2;
    color: #217346;
}

.sheet thead th.sel {
    border-bottom: 2px solid #217346;
}

.sheet tbody th.sel {
    border-right: 2px solid #217346;
}

.sheet thead .corner {
    padding: 2px 2px 2px 12px;
}

.sheet td {
    padding-bottom: 8px;
}

.sheet .head,
.sheet .person,
.sheet .num,
.sheet .diag {
    border-color: #333;
}

.sheet .head,
.sheet .diag {
    background-color: #ddebf7;
}

.sheet .num {
    padding-right: 4px;
    background-color: #c6c6c6;
    font-size: 26px;
    text-align: right;
}

.sheet .current {
    background-color: #fff;
}

.sheet .diag {
    padding: 0;
    background-image: linear-gradient(to top right, transparent calc(50% - 1px), #333 50%, transparent calc(50% + 1px));
    font-size: 20px;
    line-height: 20px;
}

.diag div {
    display: flex;
    flex-direction: column;
    justify-content: space-between;
    height: 55px;
    padding: 0 8px 0 4px;
}

.diag span:first-child {
    align-self: flex-end;
}

.diag span:last-child {
    align-self: flex-start;
}

.selection {
    position: absolute;
    left: 151px;
    top: 98px;
    width: 709px;
    height: 282px;
    border: 2px solid #217346;
    box-shadow: inset 0 0 0 1px #fff;
}

.frame {
    position: absolute;
    border: 4px solid #f00000;
    outline: 1px solid #fff;
}

.frame-col {
    left: 754px;
    top: 92px;
    width: 109px;
    height: 294px;
}

.frame-row {
    left: 146px;
    top: 319px;
    width: 717px;
    height: 67px;
}

.quick-analysis {
    position: absolute;
    left: 861px;
    top: 382px;
    display: flex;
    align-items: center;
    justify-content: center;
    width: 23px;
    height: 23px;
    border: 1px solid #217346;
    background-color: #fff;
}

.pointer {
    position: absolute;
    left: 825px;
    top: 92px;
}

.callout {
    position: absolute;
    left: 881px;
    top: 33px;
    width: 349px;
    height: 65px;
    border: 4px solid #e80c10;
    background-color: #fff;
    color: #f00;
    font-family: "Noto Sans CJK JP", sans-serif;
    font-size: 35px;
    font-weight: 900;
    line-height: 50px;
    text-align: center;
    font-feature-settings: normal;
}

.vscroll {
    display: flex;
    flex-direction: column;
    width: 19px;
    padding: 2px 1px 0 2px;
    background-color: #f0f0f0;
}

.vscroll button,
.hscroll button {
    display: flex;
    align-items: center;
    justify-content: center;
    width: 16px;
    height: 16px;
    border: 1px solid #ababab;
    background-color: #fff;
}

.vscroll .thumb {
    height: 116px;
    border: 1px solid #ababab;
    background-color: #fff;
}

.vscroll .end {
    margin-top: auto;
}

/* シート見出し */
.sheetbar {
    display: flex;
    align-items: center;
    flex: none;
    height: 26px;
    padding: 0 20px 0 14px;
    border-bottom: 1px solid #cfcfcf;
}

.nav {
    display: flex;
    justify-content: center;
    width: 25px;
}

.sheets {
    display: flex;
    align-self: flex-start;
    margin-left: 24px;
    font-size: 14px;
    line-height: 24px;
    color: #555;
}

.sheets a {
    width: 71px;
    height: 24px;
    border-left: 1px solid #ababab;
    text-align: center;
}

.sheets .active {
    border-right: 1px solid #ababab;
    border-bottom: 2px solid #217346;
    background-color: #fff;
    color: #217346;
}

.add {
    margin-left: 29px;
}

.grip.small {
    margin: 0 13px 0 auto;
}

.hscroll {
    display: flex;
    width: 462px;
    background-color: #f3f3f3;
}

.hscroll .thumb {
    width: 388px;
    border: 1px solid #ababab;
    background-color: #fff;
}

.hscroll .end {
    margin-left: auto;
}

/* ステータスバー */
.status {
    display: flex;
    align-items: center;
    flex: none;
    height: 21px;
    padding: 0 20px 0 11px;
    background-color: #f3f3f3;
    white-space: nowrap;
}

.status > svg {
    margin: 0 18px 0 20px;
}

.access {
    display: flex;
    align-items: center;
    gap: 2px;
    font-weight: 700;
}

.totals {
    display: flex;
    gap: 16px;
    margin-left: auto;
}

.disp {
    display: flex;
    align-items: center;
    gap: 1px;
    margin: 0 20px 0 25px;
}

.view {
    display: flex;
    align-items: center;
    justify-content: center;
    width: 40px;
    height: 21px;
}

.view.on {
    background-color: #c8c8c8;
}

.zoom {
    padding: 0 5px;
}

.view + .zoom {
    padding-left: 6px;
}

.slider {
    width: 100px;
    height: 12px;
    appearance: none;
    background: linear-gradient(#666, #666) center / 1px 7px no-repeat, linear-gradient(#666, #666) center / 100% 1px no-repeat;
}

.slider::-webkit-slider-thumb {
    appearance: none;
    width: 5px;
    height: 11px;
    background-color: #444;
}

.percent {
    width: 41px;
    text-align: right;
}
```
